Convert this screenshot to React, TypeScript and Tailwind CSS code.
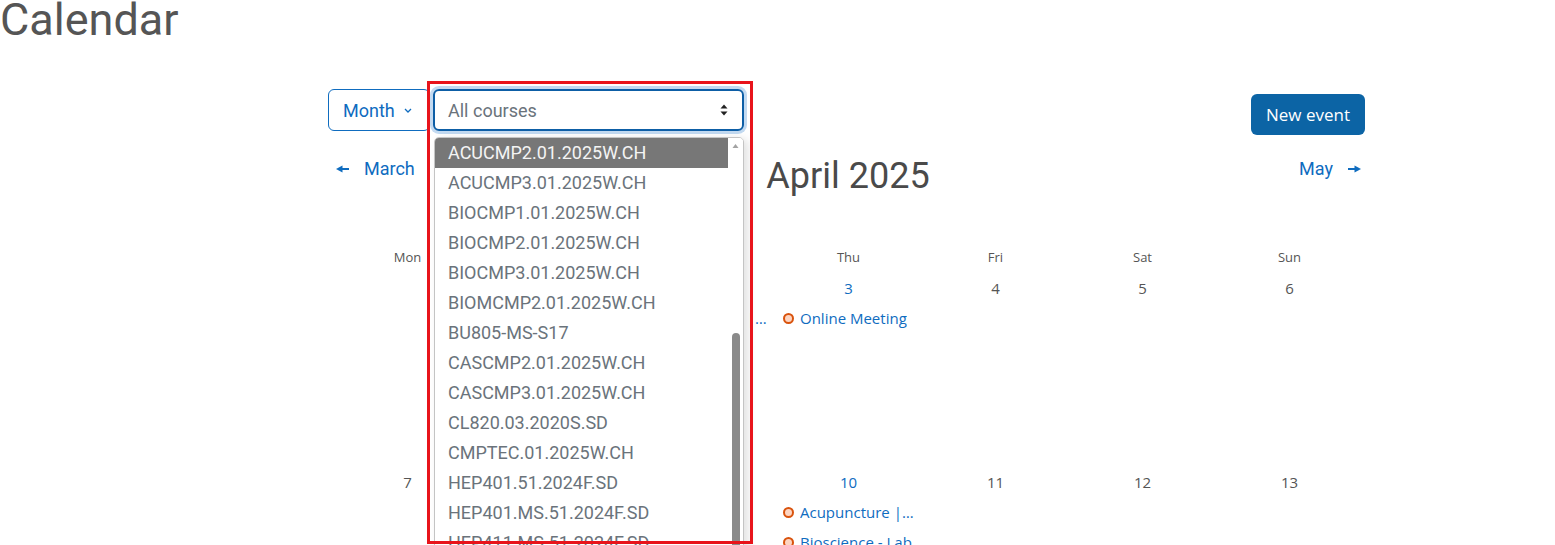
import React from 'react';

const courses = [
  'ACUCMP2.01.2025W.CH',
  'ACUCMP3.01.2025W.CH',
  'BIOCMP1.01.2025W.CH',
  'BIOCMP2.01.2025W.CH',
  'BIOCMP3.01.2025W.CH',
  'BIOMCMP2.01.2025W.CH',
  'BU805-MS-S17',
  'CASCMP2.01.2025W.CH',
  'CASCMP3.01.2025W.CH',
  'CL820.03.2020S.SD',
  'CMPTEC.01.2025W.CH',
  'HEP401.51.2024F.SD',
  'HEP401.MS.51.2024F.SD',
  'HEP411.MS.51.2024F.SD',
  'HEP412.MS.51.2024F.SD',
];

type Day = { n?: number; events?: string[] };

const weeks: Day[][] = [
  [{}, { n: 1 }, { n: 2, events: ['Acupuncture | TCM Theory'] }, { n: 3, events: ['Online Meeting'] }, { n: 4 }, { n: 5 }, { n: 6 }],
  [
    { n: 7 },
    { n: 8 },
    { n: 9 },
    { n: 10, events: ['Acupuncture | Clinic Hours', 'Bioscience - Lab'] },
    { n: 11 },
    { n: 12 },
    { n: 13 },
  ],
];

const roboto = { fontFamily: 'Roboto, "Liberation Sans", sans-serif' };
const sans = { fontFamily: '"Open Sans", "Noto Sans", sans-serif' };

const ArrowLeft = () => (
  <svg width="13" height="8" viewBox="0 0 13 8" className="fill-[#0f6cbf]">
    <path d="M0 4 L6.5 0.5 L6.5 7.5 Z" />
    <rect x="6" y="3" width="7" height="2" />
  </svg>
);

const ArrowRight = () => (
  <svg width="13" height="8" viewBox="0 0 13 8" className="fill-[#0f6cbf]">
    <path d="M13 4 L6.5 0.5 L6.5 7.5 Z" />
    <rect x="0" y="3" width="7" height="2" />
  </svg>
);

export default function App() {
  return (
    <div className="relative h-[545px] w-[1555px] overflow-hidden bg-white">
      <h1 className="-mt-[3px] text-[45px] leading-none text-[#555]" style={roboto}>
        Calendar
      </h1>

      <div className="ml-[328px] mt-[47px] w-[1037px]">
        {/* toolbar */}
        <div className="flex items-start">
          <button
            className="flex h-[42px] w-[102px] items-center gap-[9px] rounded-md border border-[#0f6cbf] pl-[14px] text-[18px] text-[#0f6cbf]"
            style={roboto}
          >
            Month
            <svg width="8" height="5" viewBox="0 0 8 5" fill="none" stroke="#0f6cbf" strokeWidth="1.3">
              <path d="M1 1 L4 4 L7 1" />
            </svg>
          </button>
          <div
            className="ml-[3px] flex h-[42px] w-[311px] items-center justify-between rounded-md border-2 border-[#0d5ea6] pl-[13px] pr-[14px] text-[18px] text-[#6a737b] ring-[3px] ring-[#c3daf1]"
            style={roboto}
          >
            All courses
            <svg width="8" height="12" viewBox="0 0 8 12" className="fill-[#222]">
              <path d="M4 0.5 L7.5 4.5 L0.5 4.5 Z" />
              <path d="M4 11.5 L7.5 7.5 L0.5 7.5 Z" />
            </svg>
          </div>
          <button
            className="ml-auto mt-[5px] h-[41px] w-[114px] rounded-md bg-[#0c64a5] text-[17px] text-white"
            style={sans}
          >
            New event
          </button>
        </div>

        {/* month navigation */}
        <div className="mt-[20px] grid grid-cols-[1fr_auto_1fr] items-start">
          <a className="flex items-center gap-[15px] pl-[8px] text-[18px] leading-[27px] text-[#0f6cbf]" style={roboto}>
            <ArrowLeft />
            March
          </a>
          <h2 className="ml-[3px] text-[36px] leading-[1.2] text-[#4a4a4a]" style={roboto}>
            April 2025
          </h2>
          <a
            className="flex items-center justify-end gap-[15px] pr-[4px] text-[18px] leading-[27px] text-[#0f6cbf]"
            style={roboto}
          >
            May
            <ArrowRight />
          </a>
        </div>

        {/* month grid */}
        <div className="ml-[6px] mt-[48px] w-[1029px]" style={sans}>
          <div className="grid h-[24px] grid-cols-7 items-center text-center text-[13px] text-[#555]">
            {['Mon', 'Tue', 'Wed', 'Thu', 'Fri', 'Sat', 'Sun'].map((d) => (
              <div key={d}>{d}</div>
            ))}
          </div>
          {weeks.map((week, wi) => (
            <div key={wi} className="grid h-[194px] grid-cols-7">
              {week.map((day, di) => (
                <div key={di} className="min-w-0 px-2 pt-[8px]">
                  <div
                    className={`h-[21px] text-center text-[15px] leading-[21px] ${
                      day.events ? 'text-[#0f6cbf]' : 'text-[#555]'
                    }`}
                  >
                    {day.n ?? ''}
                  </div>
                  <div className="mt-[8px] flex flex-col gap-[7.5px]">
                    {day.events?.map((ev) => (
                      <div key={ev} className="flex h-[22.5px] items-center gap-[6px]">
                        <span className="h-[11px] w-[11px] shrink-0 rounded-full border-2 border-[#d9530d] bg-[#fdd5c2]" />
                        <span className="truncate text-[15px] text-[#0f6cbf]">{ev}</span>
                      </div>
                    ))}
                  </div>
                </div>
              ))}
            </div>
          ))}
        </div>
      </div>

      {/* open course select list */}
      <div
        className="absolute left-[434px] top-[137px] flex h-[420px] w-[310px] overflow-hidden rounded-t-[5px] border border-[#c4c4c4] bg-white shadow-[4px_2px_10px_rgba(0,0,0,0.12)]"
        style={roboto}
      >
        <ul className="flex-1">
          {courses.map((c, i) => (
            <li
              key={c}
              className={`h-[30px] pl-[13px] text-[18px] leading-[29px] ${
                i === 0 ? 'bg-[#777] text-[#f4f4f4]' : 'text-[#6a737b]'
              }`}
            >
              {c}
            </li>
          ))}
        </ul>
        <div className="flex w-[15px] flex-col items-center bg-white">
          <svg width="9" height="6" viewBox="0 0 9 6" className="mt-[6px] fill-[#a3a3a3]">
            <path d="M4.5 0 L9 6 L0 6 Z" />
          </svg>
          <div className="mt-[185px] h-[300px] w-[8px] rounded-[4px] bg-[#8a8a8a]" />
        </div>
      </div>

      {/* highlight box */}
      <div className="pointer-events-none absolute left-[427px] top-[81px] h-[463px] w-[326px] border-[3px] border-[#e8141b]" />
    </div>
  );
}
